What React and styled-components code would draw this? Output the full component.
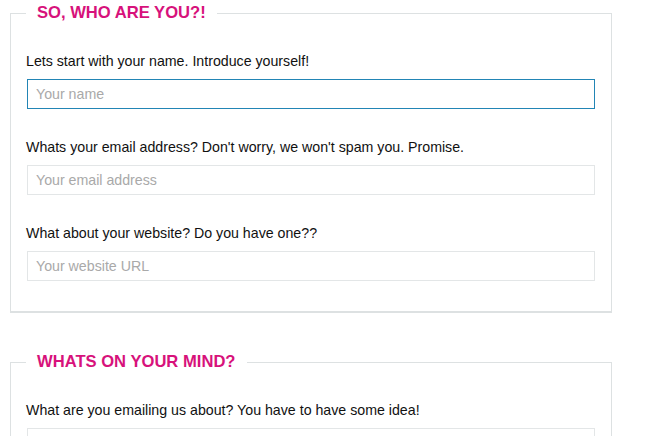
import React from 'react';
import styled, { createGlobalStyle } from 'styled-components';

const GlobalStyle = createGlobalStyle`
  html, body {
    margin: 0;
    padding: 0;
    background: #ffffff;
  }

  body {
    font-family: 'Liberation Sans', Arial, sans-serif;
    color: #222;
  }
`;

const Page = styled.form`
  display: flex;
  flex-direction: column;
  gap: 39px;
  padding: 3px 10px;
  width: 602px;
`;

const Section = styled.fieldset`
  margin: 0;
  padding: 28px 15px 30px;
  border: 1px solid #dde1e2;
  border-bottom-width: 2px;
  display: flex;
  flex-direction: column;
  min-width: 0;
`;

const Legend = styled.legend`
  padding: 0 11px;
  font-size: 16.6px;
  line-height: 20px;
  font-weight: 700;
  text-transform: uppercase;
  color: #d7127b;
`;

const Field = styled.div`
  display: flex;
  flex-direction: column;
  gap: 8px;

  & + & {
    margin-top: 28px;
  }
`;

const Label = styled.label`
  font-size: 14.2px;
  line-height: 20px;
  color: #111;
`;

const Input = styled.input`
  box-sizing: border-box;
  margin: 0 1px 0 1px;
  height: 30px;
  padding: 0 8px;
  font-family: inherit;
  font-size: 14.2px;
  color: #333;
  border: 1px solid ${(p) => (p.$focused ? '#2285b5' : '#e3e6e7')};
  border-radius: 0;
  outline: none;
  background: #fff;

  &::placeholder {
    color: #a9a9a9;
  }
`;

const sections = [
  {
    title: 'So, who are you?!',
    fields: [
      { id: 'name', label: 'Lets start with your name. Introduce yourself!', placeholder: 'Your name', focused: true },
      { id: 'email', label: "Whats your email address? Don't worry, we won't spam you. Promise.", placeholder: 'Your email address' },
      { id: 'website', label: 'What about your website? Do you have one??', placeholder: 'Your website URL' },
    ],
  },
  {
    title: 'Whats on your mind?',
    fields: [
      { id: 'subject', label: 'What are you emailing us about? You have to have some idea!', placeholder: 'Subject' },
      { id: 'message', label: 'Go on, tell us what you think.', placeholder: 'Your message' },
    ],
  },
];

const App = () => (
  <>
    <GlobalStyle />
    <Page onSubmit={(e) => e.preventDefault()}>
      {sections.map((section) => (
        <Section key={section.title}>
          <Legend>{section.title}</Legend>
          {section.fields.map((field) => (
            <Field key={field.id}>
              <Label htmlFor={field.id}>{field.label}</Label>
              <Input id={field.id} type="text" placeholder={field.placeholder} $focused={field.focused} />
            </Field>
          ))}
        </Section>
      ))}
    </Page>
  </>
);

export default App;
